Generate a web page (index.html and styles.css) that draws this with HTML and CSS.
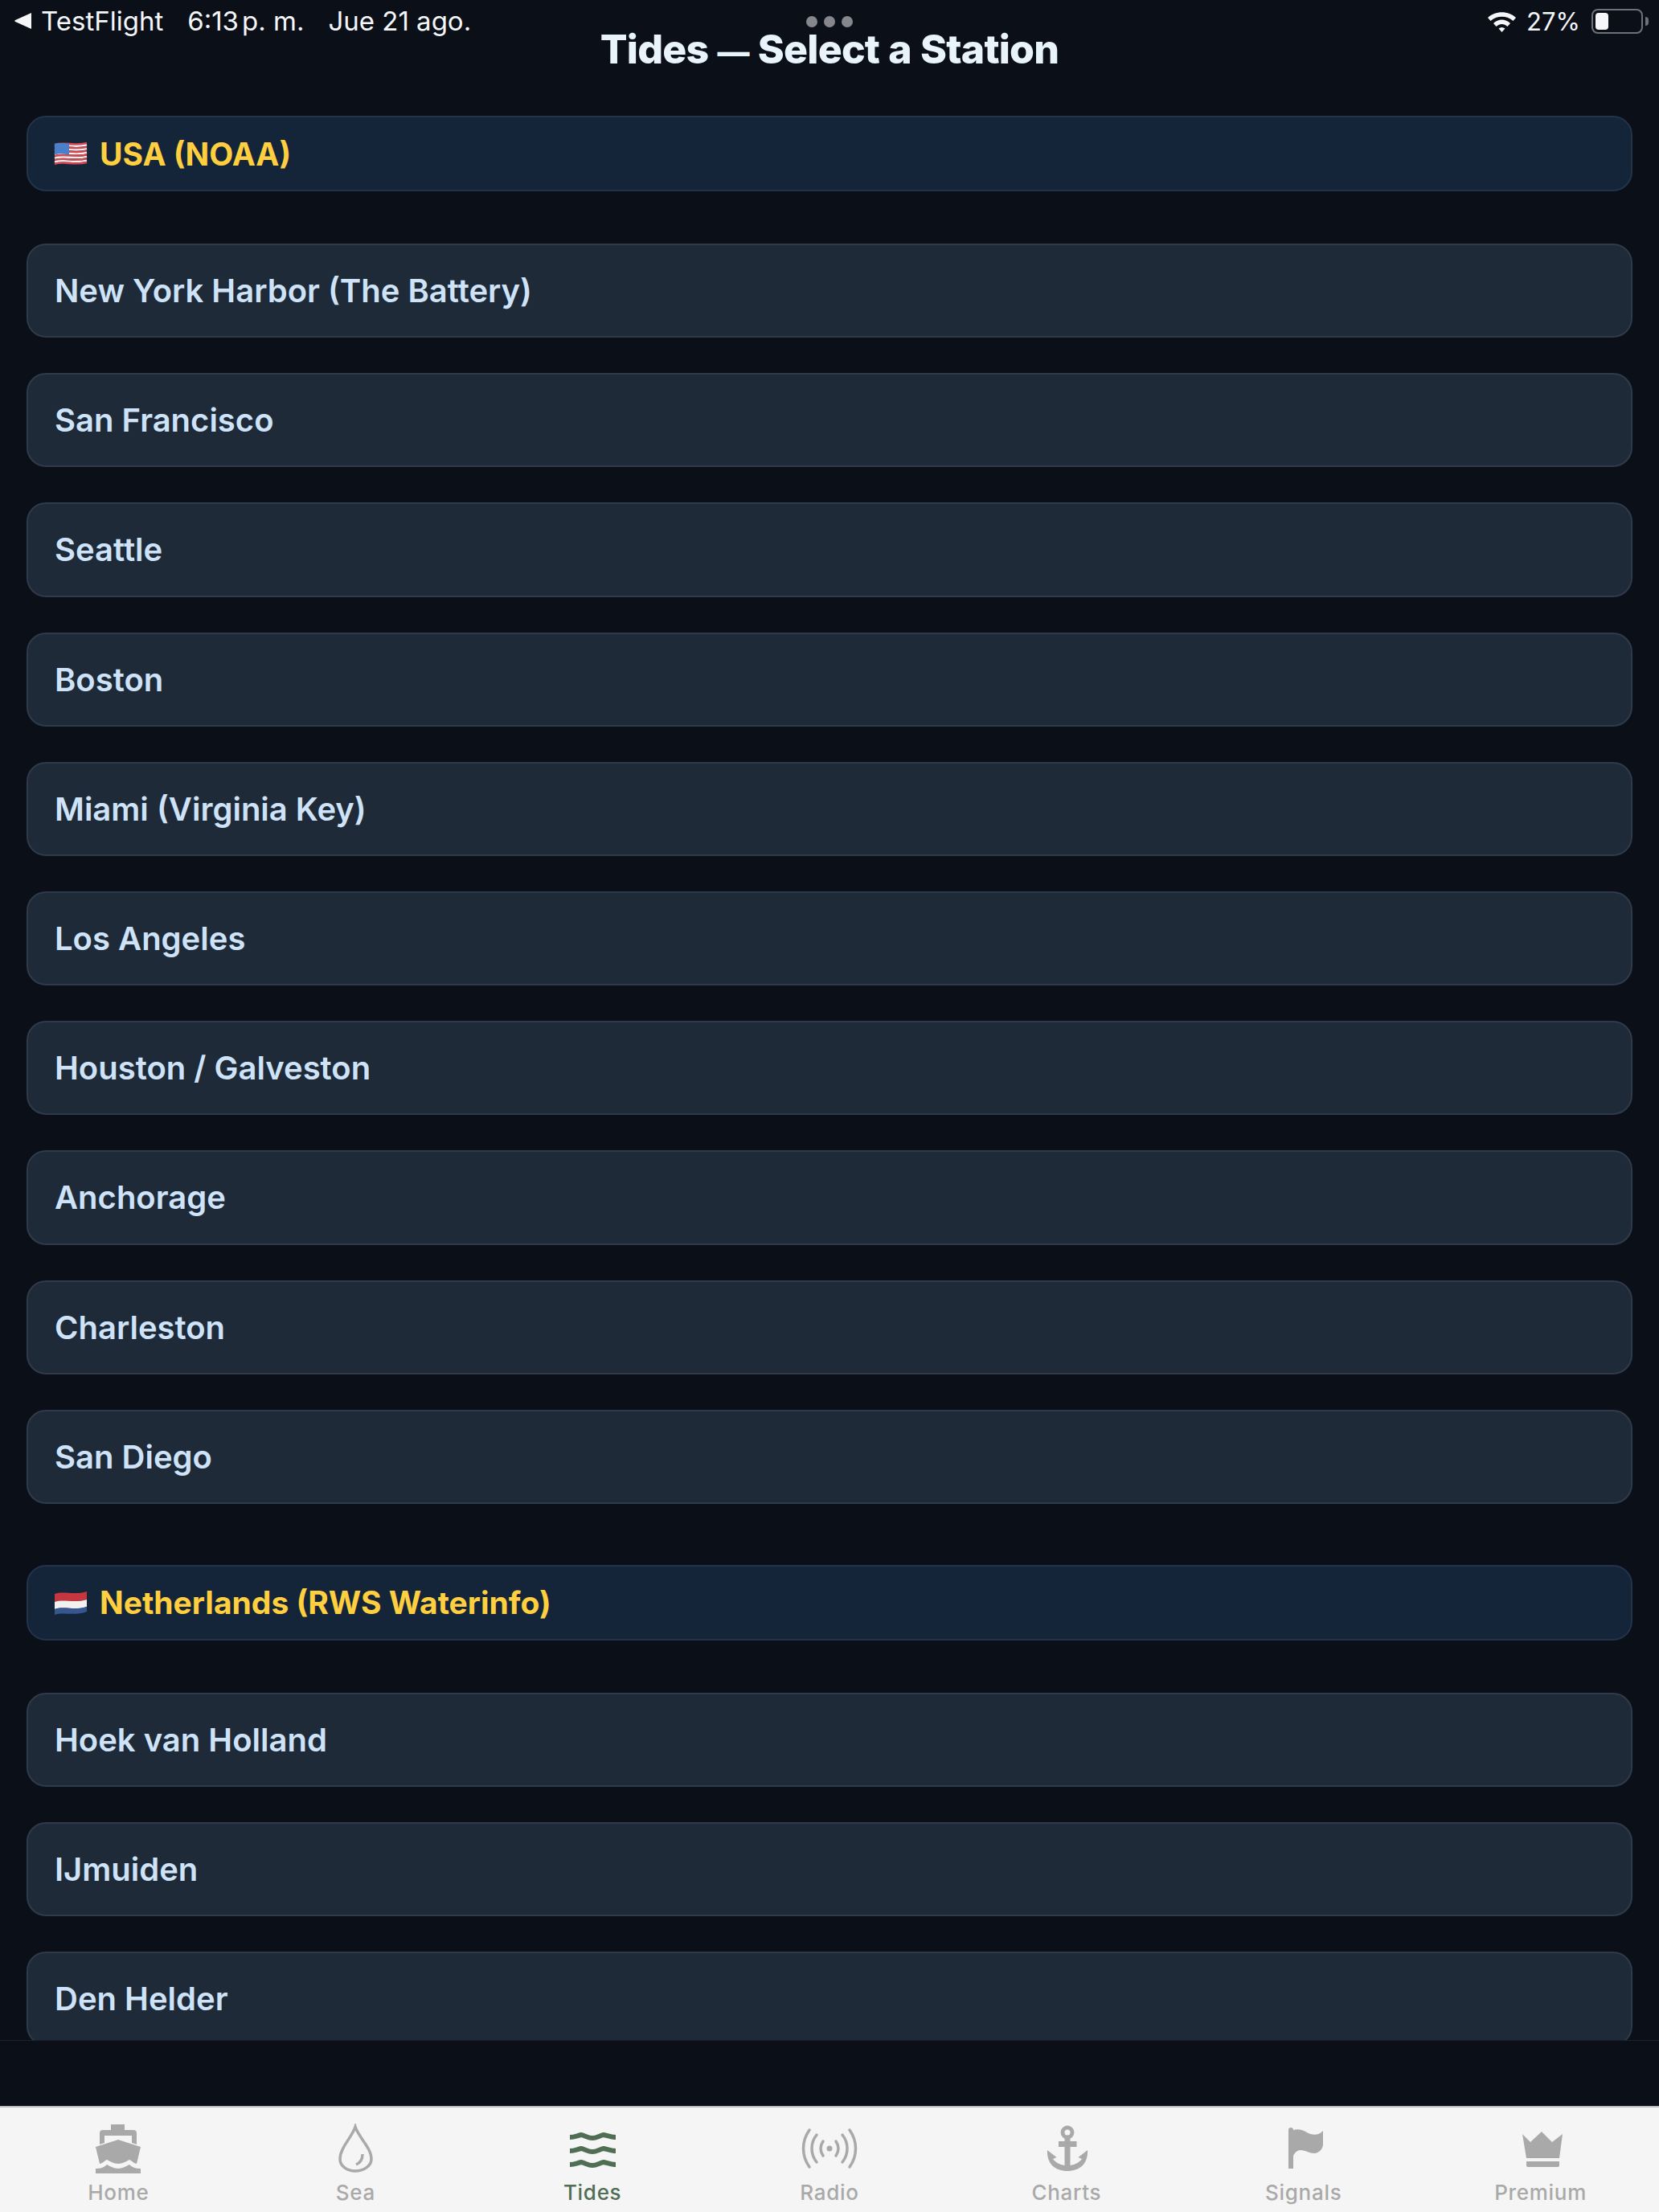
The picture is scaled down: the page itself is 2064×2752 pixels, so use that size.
FILE: index.html
```html
<!DOCTYPE html>
<html lang="en">
<head>
    <meta charset="UTF-8">
    <meta name="viewport" content="width=device-width, initial-scale=1.0">
    <title>Tides — Select a Station</title>
    <link rel="stylesheet" href="styles.css">
</head>
<body>
    <div class="status-bar">
        <div class="status-left">
            <svg class="back-arrow" viewBox="0 0 21 20"><path d="M21 0V20L1 11a1.2 1.2 0 0 1 0-2z"/></svg>
            <span class="status-app">TestFlight</span>
            <span class="status-time">6:13<span class="thin-gap"></span>p. m.</span>
            <span class="status-date">Jue 21 ago.</span>
        </div>
        <div class="status-dots"><i></i><i></i><i></i></div>
        <div class="status-right">
            <svg class="wifi" viewBox="0 0 37 28">
                <path d="M1 10C10 1 27 1 36 10L32.500 14C25 7 12 7 4.500 14z"/>
                <path d="M8 17C14 11 23 11 29 17L25.500 21C21 17 16 17 11.500 21z"/>
                <path d="M14.500 23.500C17 21.500 20 21.500 22.500 23.500L18.500 28z"/>
            </svg>
            <span class="status-battery-text">27%</span>
            <div class="battery"><div class="battery-fill"></div></div>
            <div class="battery-nub"></div>
        </div>
    </div>

    <h1 class="page-title">Tides <span class="title-dash">—</span> Select a Station</h1>

    <div class="station-list">
        <section class="region">
            <div class="region-header">
                <svg class="flag" viewBox="0 0 42 32">
                    <g fill="none" stroke-width="2.400">
                        <path stroke="#d8464f" d="M1 5C12 1 26 7 41 3"/>
                        <path stroke="#f3eeee" d="M1 7.400C12 3.400 26 9.400 41 5.400"/>
                        <path stroke="#d8464f" d="M1 9.800C12 5.800 26 11.800 41 7.800"/>
                        <path stroke="#f3eeee" d="M1 12.200C12 8.200 26 14.200 41 10.200"/>
                        <path stroke="#d8464f" d="M1 14.600C12 10.600 26 16.600 41 12.600"/>
                        <path stroke="#f3eeee" d="M1 17C12 13 26 19 41 15"/>
                        <path stroke="#d8464f" d="M1 19.400C12 15.400 26 21.400 41 17.400"/>
                        <path stroke="#f3eeee" d="M1 21.800C12 17.800 26 23.800 41 19.800"/>
                        <path stroke="#d8464f" d="M1 24.200C12 20.200 26 26.200 41 22.200"/>
                        <path stroke="#f3eeee" d="M1 26.600C12 22.600 26 28.600 41 24.600"/>
                        <path stroke="#d8464f" d="M1 29C12 25 26 31 41 27"/>
                    </g>
                    <path fill="#4a7fc9" d="M1 4C7 2.500 13 3 19 4.300V18C13 16 7 15.500 1 17.500z"/>
                </svg>
                <span>USA (NOAA)</span>
            </div>
            <div class="station">New York Harbor (The Battery)</div>
            <div class="station">San Francisco</div>
            <div class="station">Seattle</div>
            <div class="station">Boston</div>
            <div class="station">Miami (Virginia Key)</div>
            <div class="station">Los Angeles</div>
            <div class="station">Houston / Galveston</div>
            <div class="station">Anchorage</div>
            <div class="station">Charleston</div>
            <div class="station">San Diego</div>
        </section>
        <section class="region">
            <div class="region-header">
                <svg class="flag" viewBox="0 0 42 32">
                    <path fill="#c6363f" d="M1 5C12 1 26 7 41 2V12C26 17 12 11 1 15z"/>
                    <path fill="#f3f0f0" d="M1 15C12 11 26 17 41 12V21C26 26 12 20 1 24z"/>
                    <path fill="#35568f" d="M1 24C12 20 26 26 41 21V27C26 33 12 27 1 31z"/>
                </svg>
                <span>Netherlands (RWS Waterinfo)</span>
            </div>
            <div class="station">Hoek van Holland</div>
            <div class="station">IJmuiden</div>
            <div class="station">Den Helder</div>
        </section>
    </div>

    <div class="list-spacer"></div>

    <nav class="tab-bar">
        <div class="tab">
            <svg class="tab-icon" viewBox="0 0 80 64">
                <path d="M31 1h17v7h11a4 4 0 0 1 4 4v14l-6-2V15H23v9l-6 2V12a4 4 0 0 1 4-4h10z"/>
                <path d="M40 20L68 29L63 50C60 50 57 46 54 45C50 47 45 50 40 50C35 50 30 47 26 45C23 46 20 50 17 50L12 29z"/>
                <path d="M12 56C18 56 22 55 26 51C30 53 35 56 40 56C45 56 50 53 54 51C58 55 62 56 68 56V62H12z"/>
            </svg>
            <span>Home</span>
        </div>
        <div class="tab">
            <svg class="tab-icon line" viewBox="0 0 80 64">
                <path d="M40 4C36 17 21 30 21 44C21 53 30 59 40 59C50 59 60 53 60 44C60 30 44 17 40 4z"/>
                <path d="M49 38C49 44 46 49 41 51"/>
            </svg>
            <span>Sea</span>
        </div>
        <div class="tab active">
            <svg class="tab-icon line" viewBox="0 0 80 64">
                <path d="M12 17C18 17 21 15 26 14C31 15 35 18 40 18C45 18 49 15 54 14C59 15 63 17 69 17"/>
                <path d="M12 34C18 34 21 32 26 31C31 32 35 35 40 35C45 35 49 32 54 31C59 32 63 34 69 34"/>
                <path d="M12 51C18 51 21 49 26 48C31 49 35 52 40 52C45 52 49 49 54 48C59 49 63 51 69 51"/>
            </svg>
            <span>Tides</span>
        </div>
        <div class="tab">
            <svg class="tab-icon line round" viewBox="0 0 80 64">
                <path d="M15 8C5 22 5 40 15 54"/>
                <path d="M24 14C16 24 16 38 24 48"/>
                <path d="M32 22C28 28 28 34 32 40"/>
                <path d="M65 8C75 22 75 40 65 54"/>
                <path d="M56 14C64 24 64 38 56 48"/>
                <path d="M48 22C52 28 52 34 48 40"/>
                <circle class="dot" cx="40" cy="31" r="3.500"/>
            </svg>
            <span>Radio</span>
        </div>
        <div class="tab">
            <svg class="tab-icon" viewBox="0 0 80 64">
                <path fill-rule="evenodd" d="M41 2.500a8.500 8.500 0 0 1 3.500 16.200V22H52.500V29H44.500V52C51 51 56 48 59 44L54.500 42L66 33C67 50 56 59 41 59C26 59 15 50 16 33L27.500 42L23 44C26 48 31 51 37.500 52V29H30V22H37.500V18.700A8.500 8.500 0 0 1 41 2.500zM41 7.500a3.500 3.500 0 1 0 0 7a3.500 3.500 0 1 0 0-7z"/>
            </svg>
            <span>Charts</span>
        </div>
        <div class="tab">
            <svg class="tab-icon" viewBox="0 0 80 64">
                <path d="M21 8a3 3 0 0 1 6 0c6-2 12 0 17 3c7 4 14 4 20-2V26c0 5-5 11-11 11c-6 0-11-4-17-4c-4 0-7 3-9 7V56H21z"/>
            </svg>
            <span>Signals</span>
        </div>
        <div class="tab">
            <svg class="tab-icon" viewBox="0 0 80 64">
                <path d="M17 13L27 23L41 10L54 23L67 13L63 43H22z"/>
                <path d="M22 47H63V52a2 2 0 0 1-2 2H24a2 2 0 0 1-2-2z"/>
            </svg>
            <span>Premium</span>
        </div>
    </nav>
</body>
</html>
```

FILE: styles.css
```css
* {
    box-sizing: border-box;
}
body {
    margin: 0;
    width: 2064px;
    height: 2752px;
    overflow: hidden;
    position: relative;
    display: flex;
    flex-direction: column;
    background: #0b0f18;
    font-family: 'Inter', 'Liberation Sans', sans-serif;
}

/* status bar sits over the title */
.status-bar {
    position: absolute;
    top: 0;
    left: 0;
    width: 100%;
    height: 52px;
    display: grid;
    grid-template-columns: 1fr auto 1fr;
    align-items: center;
    padding: 0 13px 0 18px;
    color: #f4f6f8;
    font-size: 33px;
}
.status-left {
    display: flex;
    align-items: center;
}
.back-arrow {
    width: 21px;
    height: 20px;
    fill: #f4f6f8;
    margin-right: 12px;
}
.status-time {
    margin-left: 30px;
}
.status-date {
    margin-left: 30px;
}
.thin-gap {
    display: inline-block;
    width: 4px;
}
.status-dots {
    display: flex;
    gap: 8px;
    margin: 1px 0 0 -5px;
}
.status-dots i {
    width: 14px;
    height: 14px;
    border-radius: 50%;
    background: #85878d;
}
.status-right {
    display: flex;
    align-items: center;
    justify-content: flex-end;
}
.wifi {
    width: 37px;
    height: 28px;
    fill: #f4f6f8;
    margin-right: 12px;
}
.status-battery-text {
    margin-right: 14px;
    font-size: 31px;
}
.battery {
    width: 64px;
    height: 31px;
    border: 2px solid #6d7178;
    border-radius: 8px;
    padding: 3px;
}
.battery-fill {
    width: 16px;
    height: 100%;
    background: #f6f7f8;
    border-radius: 4px;
}
.battery-nub {
    width: 4px;
    height: 11px;
    margin-left: 3px;
    background: #6d7178;
    border-radius: 0 4px 4px 0;
}

.page-title {
    margin: 0;
    height: 144px;
    padding-top: 34px;
    text-align: center;
    color: #e9f3fc;
    font-size: 50px;
    line-height: 54px;
    font-weight: 800;
    letter-spacing: -0.800px;
    word-spacing: 1px;
}
.title-dash {
    font-size: 40px;
}

.station-list {
    height: 2395px;
    overflow: hidden;
    padding: 0 33px;
    border-bottom: 1px solid #1a212c;
    flex-shrink: 0;
}
.region {
    padding-bottom: 32px;
}
.region-header {
    height: 94px;
    margin-bottom: 65px;
    display: flex;
    align-items: center;
    gap: 15px;
    padding-left: 32px;
    background: #14253a;
    border: 2px solid #22334a;
    border-radius: 24px;
    color: #ffcf3f;
    font-size: 39px;
    font-weight: 700;
}
.flag {
    width: 42px;
    height: 32px;
}
.station {
    height: 117.200px;
    margin-bottom: 44px;
    display: flex;
    align-items: center;
    padding-left: 33px;
    background: #1e2a38;
    border: 2px solid #2f3b4b;
    border-radius: 24px;
    color: #cfe3f8;
    font-size: 40px;
    font-weight: 600;
}

.list-spacer {
    flex: 1;
}

.tab-bar {
    height: 132px;
    flex-shrink: 0;
    display: grid;
    grid-template-columns: repeat(7, 1fr);
    background: #f5f5f5;
    border-top: 2px solid #b9bbc0;
}
.tab {
    display: flex;
    flex-direction: column;
    align-items: center;
    padding-top: 20px;
    color: #a9a9a9;
    font-size: 26px;
    font-weight: 500;
    letter-spacing: 0.7px;
}
.tab span {
    margin-top: 6px;
    line-height: 32px;
}
.tab-icon {
    width: 80px;
    height: 64px;
    fill: #a9a9a9;
}
.tab-icon.line {
    fill: none;
    stroke: #a9a9a9;
    stroke-width: 3.500;
}
.tab-icon.round {
    stroke-linecap: round;
}
.tab-icon .dot {
    fill: #a9a9a9;
    stroke: none;
}
.tab.active {
    color: #4f6e53;
}
.tab.active .tab-icon {
    stroke: #4f6e53;
    stroke-width: 6;
}
```
